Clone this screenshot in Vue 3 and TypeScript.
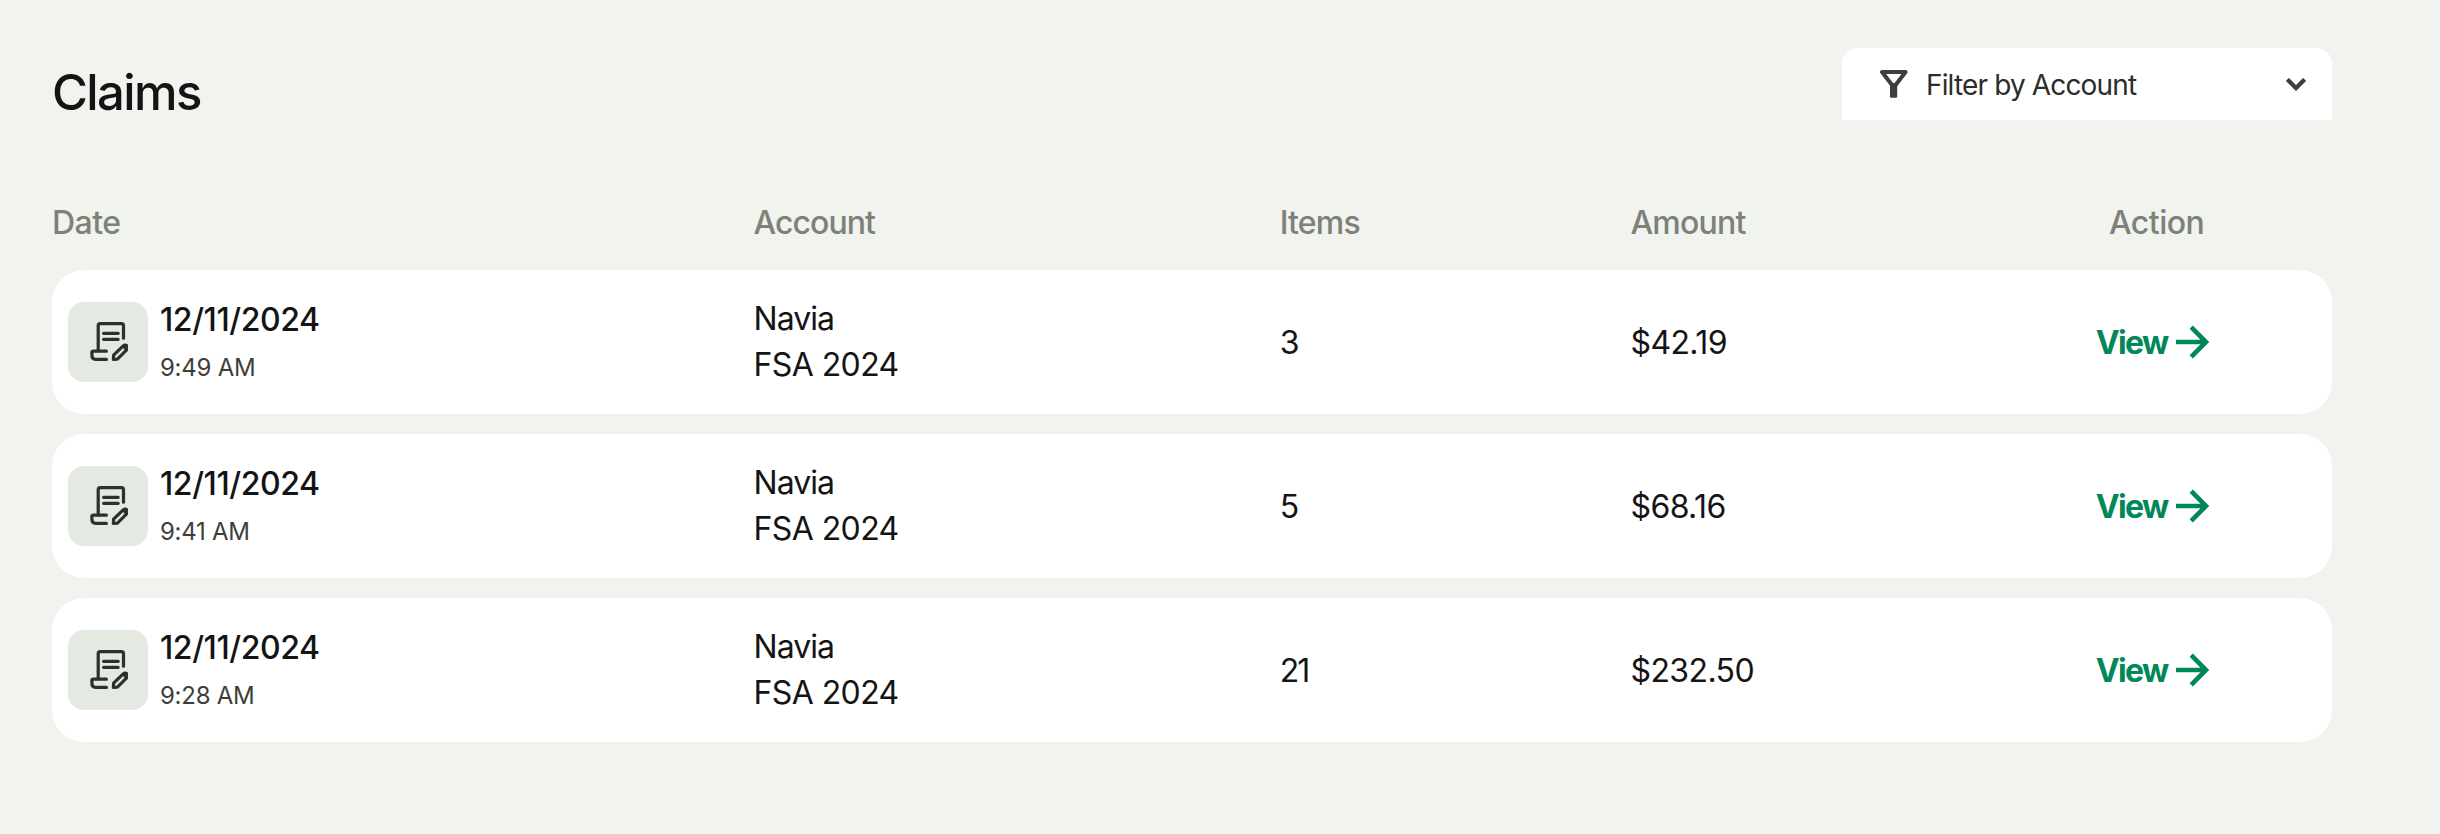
<script setup lang="ts">
interface Claim {
  id: number
  date: string
  time: string
  provider: string
  plan: string
  items: number
  amount: string
}

const claims: Claim[] = [
  { id: 1, date: '12/11/2024', time: '9:49 AM', provider: 'Navia', plan: 'FSA 2024', items: 3, amount: '$42.19' },
  { id: 2, date: '12/11/2024', time: '9:41 AM', provider: 'Navia', plan: 'FSA 2024', items: 5, amount: '$68.16' },
  { id: 3, date: '12/11/2024', time: '9:28 AM', provider: 'Navia', plan: 'FSA 2024', items: 21, amount: '$232.50' },
]
</script>

<template>
  <main class="page">
    <header class="top">
      <h1 class="title">Claims</h1>
      <button class="filter" type="button">
        <svg class="funnel" viewBox="0 0 28 28" aria-hidden="true">
          <path class="funnel-cup" d="M2 2H25.6L14.6 16.2H13L2 2Z" />
          <path class="funnel-stem" d="M10 13H17.2V26.4Q17.2 27.7 15.9 27.7H11.3Q10 27.7 10 26.4Z" />
        </svg>
        <span class="filter-label">Filter by Account</span>
        <svg class="chevron" viewBox="0 0 20 13" aria-hidden="true">
          <path d="M1.4 1.4L10 10L18.6 1.4" />
        </svg>
      </button>
    </header>

    <div class="head grid">
      <span class="h-date">Date</span>
      <span class="h-account">Account</span>
      <span>Items</span>
      <span>Amount</span>
      <span class="h-action">Action</span>
    </div>

    <section class="list">
      <article v-for="claim in claims" :key="claim.id" class="card grid">
        <div class="when">
          <span class="tile">
            <svg viewBox="0 0 40 40" aria-hidden="true">
              <path class="line" d="M10.2 29V3.8Q10.2 1.7 12.3 1.7H33.4Q35.5 1.7 35.5 3.8V16.2" />
              <path class="line" d="M15.6 11.3H30.2M15.6 17.3H30.2" />
              <path class="line" d="M18.4 29.2H5.4Q3.9 29.2 3.9 30.7V33.6Q3.9 37.4 7.7 37.4H18.4" />
              <path class="pencil" d="M25.4 37.4L25.6 33.2L35.2 23.9Q37.2 22.2 39 24Q40.6 25.8 38.9 27.7L29.4 37.2Z" />
              <path class="cap" d="M33.4 25Q37 20.8 40 23V28L37.4 30.4Q37.2 26.6 33.4 25Z" />
            </svg>
          </span>
          <div class="stamp">
            <span class="date">{{ claim.date }}</span>
            <span class="time">{{ claim.time }}</span>
          </div>
        </div>
        <div class="account">
          <span class="provider">{{ claim.provider }}</span>
          <span>{{ claim.plan }}</span>
        </div>
        <span class="items">{{ claim.items }}</span>
        <span class="amount">{{ claim.amount }}</span>
        <a class="view">
          <span class="view-label">View</span>
          <svg viewBox="0 0 33 34" aria-hidden="true">
            <path d="M0 17H29M15.2 2.2L30 17L15.2 31.8" />
          </svg>
        </a>
      </article>
    </section>
  </main>
</template>

<style>
body {
  margin: 0;
  background: #f0f3ee;
}
</style>

<style scoped>
.page {
  box-sizing: border-box;
  width: 2440px;
  height: 834px;
  padding: 48px 108px 0 52px;
  background: #f0f3ee;
  color: #141414;
  font-family: Inter, 'Liberation Sans', sans-serif;
  font-size: 32px;
}

.top {
  display: flex;
  justify-content: space-between;
  align-items: flex-start;
}

.title {
  margin: 15px 0 0;
  font-size: 49px;
  line-height: 60px;
  font-weight: 500;
  letter-spacing: -1.6px;
}

.filter {
  display: flex;
  align-items: center;
  box-sizing: border-box;
  width: 490px;
  height: 72px;
  padding: 0 26px 0 38px;
  border: 0;
  border-radius: 16px 16px 0 0;
  background: #fff;
  color: #2b2d29;
  font: 400 28px/40px Inter, 'Liberation Sans', sans-serif;
  text-align: left;
}

.funnel {
  width: 28px;
  height: 28px;
}

.funnel-cup {
  fill: none;
  stroke: #3d3f3a;
  stroke-width: 4;
  stroke-linejoin: round;
}

.funnel-stem {
  fill: #3d3f3a;
}

.filter-label {
  margin-left: 18px;
  padding-top: 2px;
  letter-spacing: -0.85px;
}

.chevron {
  width: 20px;
  height: 13px;
  margin-left: auto;
  fill: none;
  stroke: #3d3f3a;
  stroke-width: 4.2;
}

.grid {
  display: grid;
  grid-template-columns: minmax(0, 4fr) minmax(0, 3fr) minmax(0, 2fr) minmax(0, 2fr) minmax(0, 2fr);
}

.head {
  margin-top: 78px;
  line-height: 44px;
  font-weight: 500;
  letter-spacing: -0.8px;
  color: #7d8176;
}

.h-date {
  letter-spacing: -0.5px;
}

.h-account {
  letter-spacing: -0.95px;
}

.h-action {
  text-align: center;
  letter-spacing: -0.5px;
}

.list {
  display: grid;
  gap: 20px;
  margin-top: 25px;
}

.card {
  align-items: center;
  height: 144px;
  border-radius: 32px;
  background: #fff;
  letter-spacing: -0.6px;
}

.when {
  display: flex;
  align-items: center;
  padding-left: 16px;
}

.tile {
  display: flex;
  align-items: center;
  justify-content: center;
  width: 80px;
  height: 80px;
  border-radius: 16px;
  background: #e4e9e2;
}

.tile svg {
  width: 40px;
  height: 40px;
}

.line,
.pencil {
  fill: none;
  stroke: #2e302b;
  stroke-width: 3.2;
  stroke-linecap: round;
  stroke-linejoin: round;
}

.cap {
  fill: #2e302b;
}

.stamp {
  display: flex;
  flex-direction: column;
  margin-left: 12px;
}

.date {
  line-height: 52px;
  font-weight: 500;
  letter-spacing: -0.42px;
}

.time {
  font-size: 24px;
  line-height: 44px;
  letter-spacing: -0.26px;
  color: #3d3f3a;
}

.account {
  display: flex;
  flex-direction: column;
  line-height: 46px;
}

.provider {
  letter-spacing: -0.96px;
}

.items {
  letter-spacing: -2px;
}

.view {
  display: flex;
  align-items: center;
  justify-content: center;
  gap: 9px;
  padding-right: 8px;
  color: #00875a;
  font-weight: 700;
}

.view-label {
  letter-spacing: -1.7px;
}

.view svg {
  width: 33px;
  height: 34px;
  fill: none;
  stroke: currentColor;
  stroke-width: 4.6;
}
</style>
